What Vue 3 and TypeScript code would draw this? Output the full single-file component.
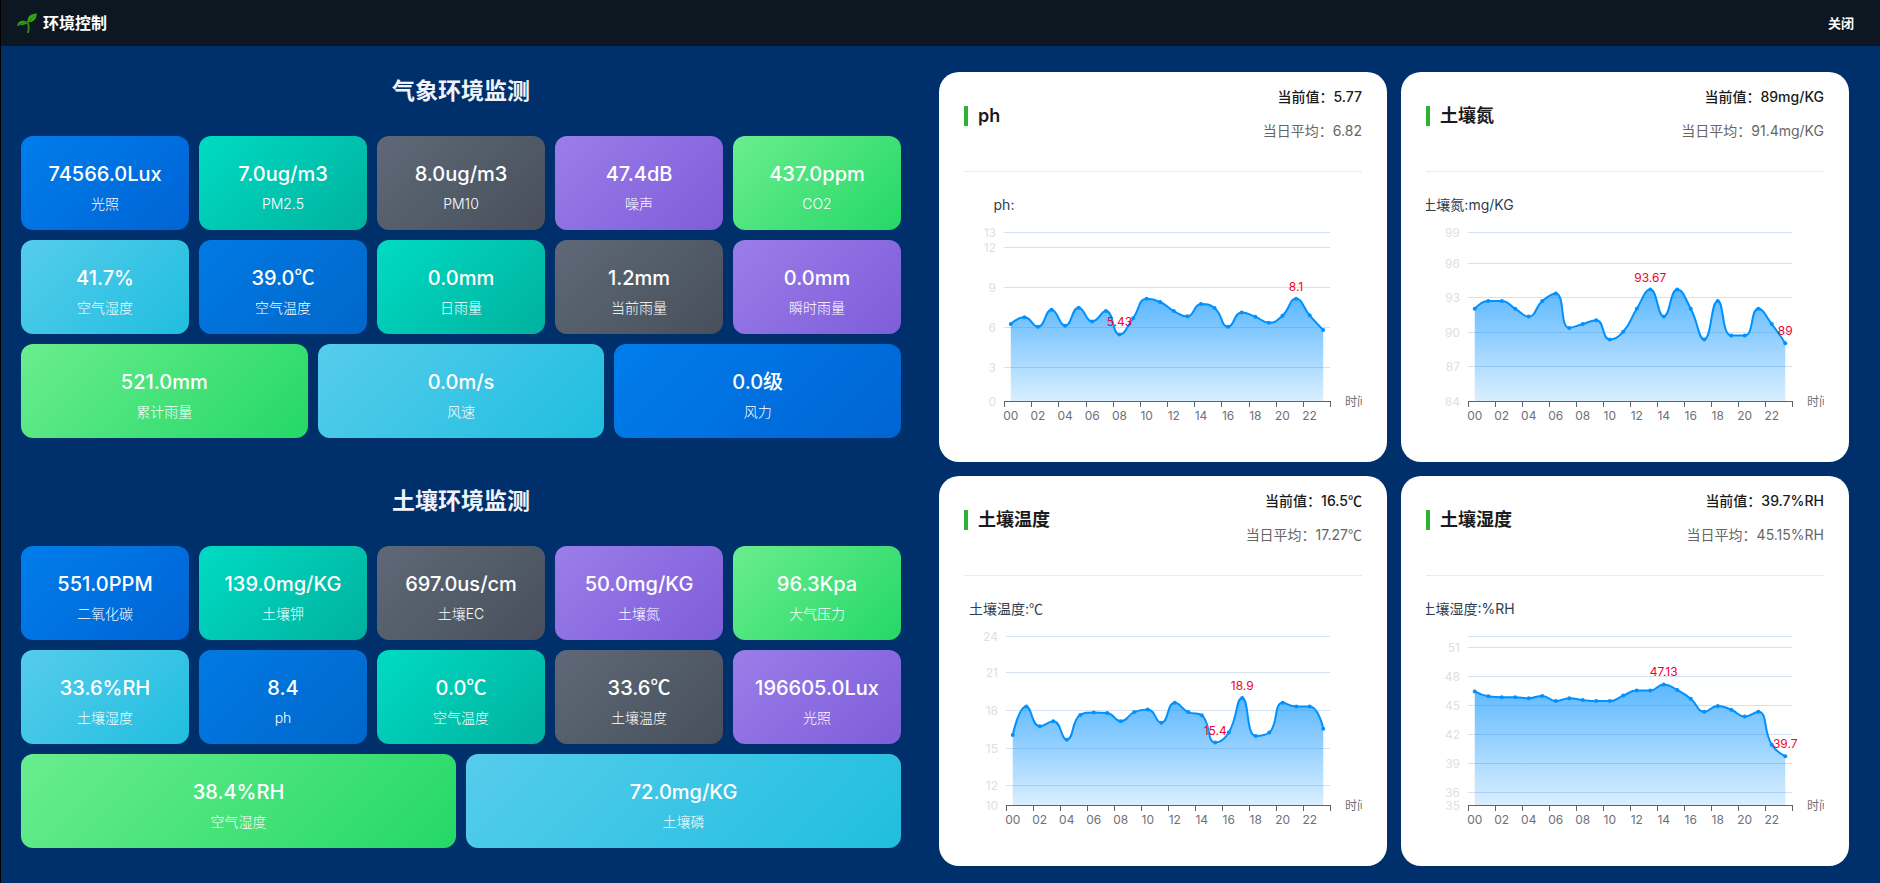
<script setup lang="ts">
import { computed, onBeforeUnmount, onMounted, ref } from 'vue'

interface Tile {
  value: string
  unit: string
  label: string
  tone: string
}

interface Section {
  title: string
  rows: Tile[][]
}

interface ChartCard {
  title: string
  current: string
  average: string
  unit: string
  left: number
  min: number
  max: number
  ticks: { at: number; label: string }[]
  values: number[]
  marks: { index: number; label: string }[]
}

interface Point {
  x: number
  y: number
}

const sections: Section[] = [
  {
    title: '气象环境监测',
    rows: [
      [
        { value: '74566.0', unit: 'Lux', label: '光照', tone: 'blue' },
        { value: '7.0', unit: 'ug/m3', label: 'PM2.5', tone: 'teal' },
        { value: '8.0', unit: 'ug/m3', label: 'PM10', tone: 'slate' },
        { value: '47.4', unit: 'dB', label: '噪声', tone: 'violet' },
        { value: '437.0', unit: 'ppm', label: 'CO2', tone: 'green' },
      ],
      [
        { value: '41.7', unit: '%', label: '空气湿度', tone: 'sky' },
        { value: '39.0', unit: '℃', label: '空气温度', tone: 'navy' },
        { value: '0.0', unit: 'mm', label: '日雨量', tone: 'teal' },
        { value: '1.2', unit: 'mm', label: '当前雨量', tone: 'slate' },
        { value: '0.0', unit: 'mm', label: '瞬时雨量', tone: 'violet' },
      ],
      [
        { value: '521.0', unit: 'mm', label: '累计雨量', tone: 'green' },
        { value: '0.0', unit: 'm/s', label: '风速', tone: 'sky' },
        { value: '0.0', unit: '级', label: '风力', tone: 'blue' },
      ],
    ],
  },
  {
    title: '土壤环境监测',
    rows: [
      [
        { value: '551.0', unit: 'PPM', label: '二氧化碳', tone: 'blue' },
        { value: '139.0', unit: 'mg/KG', label: '土壤钾', tone: 'teal' },
        { value: '697.0', unit: 'us/cm', label: '土壤EC', tone: 'slate' },
        { value: '50.0', unit: 'mg/KG', label: '土壤氮', tone: 'violet' },
        { value: '96.3', unit: 'Kpa', label: '大气压力', tone: 'green' },
      ],
      [
        { value: '33.6', unit: '%RH', label: '土壤湿度', tone: 'sky' },
        { value: '8.4', unit: '', label: 'ph', tone: 'navy' },
        { value: '0.0', unit: '℃', label: '空气温度', tone: 'teal' },
        { value: '33.6', unit: '℃', label: '土壤温度', tone: 'slate' },
        { value: '196605.0', unit: 'Lux', label: '光照', tone: 'violet' },
      ],
      [
        { value: '38.4', unit: '%RH', label: '空气湿度', tone: 'green' },
        { value: '72.0', unit: 'mg/KG', label: '土壤磷', tone: 'sky' },
      ],
    ],
  },
]

const cards: ChartCard[] = [
  {
    title: 'ph',
    current: '5.77',
    average: '6.82',
    unit: '',
    left: 40,
    min: 0.46,
    max: 13.09,
    ticks: [
      { at: 13.09, label: '13' },
      { at: 12, label: '12' },
      { at: 9, label: '9' },
      { at: 6, label: '6' },
      { at: 3, label: '3' },
      { at: 0.46, label: '0' },
    ],
    values: [
      6.21, 6.71, 6.0, 7.28, 6.09, 7.43, 6.41, 7.18, 5.43, 6.64, 8.1, 7.86,
      7.18, 6.79, 7.71, 7.41, 6.0, 7.08, 6.76, 6.31, 6.84, 8.1, 6.86, 5.77,
    ],
    marks: [
      { index: 21, label: '8.1' },
      { index: 8, label: '5.43' },
    ],
  },
  {
    title: '土壤氮',
    current: '89',
    average: '91.4',
    unit: 'mg/KG',
    left: 42,
    min: 83.96,
    max: 98.69,
    ticks: [
      { at: 98.69, label: '99' },
      { at: 96, label: '96' },
      { at: 93, label: '93' },
      { at: 90, label: '90' },
      { at: 87, label: '87' },
      { at: 83.96, label: '84' },
    ],
    values: [
      92, 92.67, 92.67, 92, 91.33, 92.67, 93.33, 90.33, 90.67, 91, 89.33, 90,
      92, 93.67, 91.33, 93.67, 92, 89.33, 92.67, 89.67, 89.67, 92, 90.67, 89,
    ],
    marks: [
      { index: 13, label: '93.67' },
      { index: 23, label: '89' },
    ],
  },
  {
    title: '土壤温度',
    current: '16.5',
    average: '17.27',
    unit: '℃',
    left: 42,
    min: 10.42,
    max: 23.9,
    ticks: [
      { at: 23.9, label: '24' },
      { at: 21, label: '21' },
      { at: 18, label: '18' },
      { at: 15, label: '15' },
      { at: 12, label: '12' },
      { at: 10.42, label: '10' },
    ],
    values: [
      16.0, 18.27, 16.7, 17.1, 15.63, 17.6, 17.8, 17.75, 17.1, 17.83, 18.03, 16.98,
      18.57, 17.83, 17.58, 15.4, 16.2, 18.95, 15.93, 16.2, 18.57, 18.27, 18.27, 16.5,
    ],
    marks: [
      { index: 17, label: '18.9' },
      { index: 15, label: '15.4' },
    ],
  },
  {
    title: '土壤湿度',
    current: '39.7',
    average: '45.15',
    unit: '%RH',
    left: 42,
    min: 34.64,
    max: 52.14,
    ticks: [
      { at: 52.14, label: '' },
      { at: 51, label: '51' },
      { at: 48, label: '48' },
      { at: 45, label: '45' },
      { at: 42, label: '42' },
      { at: 39, label: '39' },
      { at: 36, label: '36' },
      { at: 34.64, label: '35' },
    ],
    values: [
      46.4, 45.9, 45.8, 45.8, 45.7, 45.93, 45.4, 45.7, 45.5, 45.4, 45.4, 45.97,
      46.5, 46.5, 47.13, 46.55, 45.65, 44.3, 44.9, 44.5, 43.8, 44.3, 40.87, 39.7,
    ],
    marks: [
      { index: 14, label: '47.13' },
      { index: 23, label: '39.7' },
    ],
  },
]

const plotTop = 60
const plotBottom = 229
const plotRightInset = 32

const chartWidth = ref(398)
const board = ref<HTMLElement | null>(null)
let observer: ResizeObserver | undefined

onMounted(() => {
  const plot = board.value?.querySelector('.plot')
  if (!plot) return
  observer = new ResizeObserver(([entry]) => {
    chartWidth.value = Math.round(entry.contentRect.width)
  })
  observer.observe(plot)
})

onBeforeUnmount(() => observer?.disconnect())

const clamp = (v: number, a: number, b: number) =>
  Math.max(Math.min(v, Math.max(a, b)), Math.min(a, b))

/** Smooth bezier path whose control points never overshoot the neighbouring samples. */
function smoothPath(points: Point[], smooth = 0.5): string {
  let d = `M${points[0].x.toFixed(2)} ${points[0].y.toFixed(2)}`
  let c0: Point = points[0]
  for (let i = 1; i < points.length; i++) {
    const cur = points[i]
    const prev = points[i - 1]
    const next = points[i + 1]
    let c1: Point = cur
    let out: Point = cur
    if (next) {
      const vx = next.x - prev.x
      const vy = next.y - prev.y
      const lenPrev = Math.hypot(cur.x - prev.x, cur.y - prev.y)
      const lenNext = Math.hypot(next.x - cur.x, next.y - cur.y)
      const ratio = lenNext / (lenNext + lenPrev)
      out = {
        x: clamp(cur.x + vx * smooth * ratio, next.x, cur.x),
        y: clamp(cur.y + vy * smooth * ratio, next.y, cur.y),
      }
      c1 = {
        x: clamp(cur.x - ((out.x - cur.x) * lenPrev) / lenNext, prev.x, cur.x),
        y: clamp(cur.y - ((out.y - cur.y) * lenPrev) / lenNext, prev.y, cur.y),
      }
      out = {
        x: cur.x + ((cur.x - c1.x) * lenNext) / lenPrev,
        y: cur.y + ((cur.y - c1.y) * lenNext) / lenPrev,
      }
    }
    d += ` C${[c0.x, c0.y, c1.x, c1.y, cur.x, cur.y].map((n) => n.toFixed(2)).join(' ')}`
    c0 = out
  }
  return d
}

const charts = computed(() =>
  cards.map((card) => {
    const right = chartWidth.value - plotRightInset
    const step = (right - card.left) / card.values.length
    const toY = (v: number) =>
      plotTop + ((card.max - v) / (card.max - card.min)) * (plotBottom - plotTop)
    const points = card.values.map((v, i) => ({ x: card.left + (i + 0.5) * step, y: toY(v) }))
    const line = smoothPath(points)
    const last = points[points.length - 1]
    return {
      ...card,
      right,
      points,
      line,
      area: `${line} L${last.x.toFixed(2)} ${plotBottom} L${points[0].x.toFixed(2)} ${plotBottom} Z`,
      rows: card.ticks.map((t) => ({ label: t.label, y: Math.round(toY(t.at)) + 0.5 })),
      columns: Array.from({ length: 12 }, (_, i) => ({
        label: String(i * 2).padStart(2, '0'),
        x: points[i * 2].x,
      })),
      axisTicks: Array.from({ length: 13 }, (_, i) => Math.round(card.left + i * 2 * step) + 0.5),
      peaks: card.marks.map((m) => ({ label: m.label, ...points[m.index] })),
    }
  }),
)
</script>

<template>
  <div class="window">
    <header class="bar">
      <div class="brand">
        <svg class="sprout" viewBox="0 0 20 20" aria-hidden="true">
          <path
            d="M10.6 9.6 Q12.6 13.6 11 19.2"
            fill="none"
            stroke="#2c8a17"
            stroke-width="2"
            stroke-linecap="round"
          />
          <path d="M10.4 9.6 C10.2 3.6 13.8 0.8 19.8 0.6 C19.6 6 16.6 9.8 10.4 9.6 Z" fill="#37a616" />
          <path d="M0.2 13.2 C0.6 8 5.6 6 11 9.2 C8.6 12.8 4.4 10.8 0.2 13.2 Z" fill="#37a616" />
          <path d="M10.8 9.4 L17.4 2.8 M1.6 11.8 Q6 9 10.4 9.4" fill="none" stroke="#1f7a10" />
        </svg>
        <h1 class="name">环境控制</h1>
      </div>
      <button type="button" class="close">关闭</button>
    </header>

    <main class="content">
      <div class="monitors">
        <section v-for="section in sections" :key="section.title" class="monitor">
          <h2 class="heading">{{ section.title }}</h2>
          <div class="rows">
            <div v-for="(row, r) in section.rows" :key="r" class="row">
              <div v-for="tile in row" :key="tile.label" class="tile" :class="tile.tone">
                <span class="value">{{ tile.value }}<span :class="{ degree: tile.unit === '℃' }">{{ tile.unit }}</span></span>
                <span class="label">{{ tile.label }}</span>
              </div>
            </div>
          </div>
        </section>
      </div>

      <div ref="board" class="board">
        <article v-for="(chart, n) in charts" :key="chart.title" class="card">
          <header class="card-head">
            <h3 class="card-title">{{ chart.title }}</h3>
            <div class="stats">
              <p class="now">
                当前值：{{ chart.current }}<span :class="{ degree: chart.unit === '℃' }">{{ chart.unit }}</span>
              </p>
              <p class="avg">
                当日平均：{{ chart.average }}<span :class="{ degree: chart.unit === '℃' }">{{ chart.unit }}</span>
              </p>
            </div>
          </header>
          <svg class="plot" role="img" :aria-label="chart.title">
            <defs>
              <linearGradient :id="`fill-${n}`" x1="0" y1="0" x2="0" y2="1">
                <stop offset="0" stop-color="#0090ff" stop-opacity="0.64" />
                <stop offset="1" stop-color="#0090ff" stop-opacity="0.15" />
              </linearGradient>
            </defs>
            <text class="axis-name" :x="chart.left" y="38">{{ chart.title }}:<tspan :class="{ degree: chart.unit === '℃' }">{{ chart.unit }}</tspan></text>
            <g v-for="row in chart.rows" :key="row.y">
              <line class="grid" :x1="chart.left" :x2="chart.right" :y1="row.y" :y2="row.y" />
              <text class="y-label" :x="chart.left - 8" :y="row.y + 4">{{ row.label }}</text>
            </g>
            <path :d="chart.area" :fill="`url(#fill-${n})`" />
            <path
              class="axis"
              :d="`M${chart.left} 229.5 H${chart.right + 1}` + chart.axisTicks.map((x) => ` M${x} 229 v6`).join('')"
            />
            <text v-for="col in chart.columns" :key="col.label" class="x-label" :x="col.x" y="248">
              {{ col.label }}
            </text>
            <text class="x-name" :x="chart.right + 15" y="234">时间</text>
            <path class="series" :d="chart.line" />
            <circle v-for="(p, i) in chart.points" :key="i" class="dot" :cx="p.x" :cy="p.y" r="2" />
            <text v-for="peak in chart.peaks" :key="peak.label" class="peak" :x="peak.x" :y="peak.y - 8">
              {{ peak.label }}
            </text>
          </svg>
        </article>
      </div>
    </main>
  </div>
</template>

<style>
body {
  margin: 0;
  background: #00306b;
}
</style>

<style scoped>
.window {
  box-sizing: border-box;
  min-height: 100vh;
  border-left: 1px solid #000;
  background: #00306b;
  font-family: Inter, 'Noto Sans CJK SC', sans-serif;
  color: #fff;
}

h1,
h2,
h3,
p {
  margin: 0;
}

.degree {
  font-family: 'Noto Sans CJK SC', sans-serif;
  line-height: 1;
}

.bar {
  display: flex;
  align-items: center;
  justify-content: space-between;
  height: 46px;
  padding: 0 26px 0 16px;
  background: #0d1721;
}

.brand {
  display: flex;
  align-items: center;
  gap: 6px;
}

.sprout {
  width: 20px;
  height: 20px;
}

.name {
  font-size: 16px;
  line-height: 24px;
  font-weight: 600;
}

.close {
  padding: 0;
  border: 0;
  background: none;
  color: #fff;
  font: inherit;
  font-size: 13px;
  line-height: 20px;
  font-weight: 600;
  cursor: pointer;
}

.content {
  display: grid;
  grid-template-columns: 880fr 910fr;
  gap: 38px;
  padding: 26px 31px 16px 20px;
}

.monitors {
  display: flex;
  flex-direction: column;
  gap: 44px;
}

.heading {
  margin-bottom: 26px;
  font-size: 23px;
  line-height: 38px;
  font-weight: 600;
  text-align: center;
  color: #f0f4fa;
}

.rows {
  display: flex;
  flex-direction: column;
  gap: 10px;
}

.row {
  display: flex;
  gap: 10px;
}

.tile {
  box-sizing: border-box;
  flex: 1 1 0;
  display: flex;
  flex-direction: column;
  align-items: center;
  gap: 6px;
  padding: 24px 8px 16px;
  border-radius: 12px;
}

.value {
  font-size: 20px;
  line-height: 28px;
  font-weight: 500;
}

.label {
  font-size: 14px;
  line-height: 20px;
  font-weight: 300;
}

.blue {
  background: linear-gradient(135deg, #007deb, #0064d4);
}

.navy {
  background: linear-gradient(135deg, #007ae4, #0067cb);
}

.teal {
  background: linear-gradient(135deg, #00dbc3, #00b19e);
}

.slate {
  background: linear-gradient(135deg, #606877, #525d69 50%, #494e5b);
}

.violet {
  background: linear-gradient(135deg, #9b7de9, #7e5dd9);
}

.green {
  background: linear-gradient(135deg, #6aed8e, #24d866);
}

.sky {
  background: linear-gradient(135deg, #56ccec, #20bedf);
}

.board {
  display: grid;
  grid-template-columns: 1fr 1fr;
  align-content: start;
  gap: 14px;
}

.card {
  padding: 0 25px 30px;
  border-radius: 20px;
  background: #fff;
  color: #1a1a1a;
}

.card-head {
  display: flex;
  justify-content: space-between;
  padding: 8px 0 23px;
  border-bottom: 1px solid #ebebeb;
}

.card-title {
  align-self: center;
  margin-top: 4px;
  padding-left: 10px;
  border-left: 4px solid #2bb232;
  font-size: 18px;
  line-height: 20px;
  font-weight: 600;
}

.stats {
  font-size: 14px;
  line-height: 34px;
  text-align: right;
}

.now {
  font-weight: 500;
}

.avg {
  color: #666;
}

.plot {
  display: block;
  width: 100%;
  height: 260px;
  overflow: hidden;
}

.plot text {
  font-size: 12px;
}

.plot .axis-name {
  font-size: 14px;
  fill: #2c3e50;
  text-anchor: middle;
}

.grid {
  stroke: #d5e1ee;
}

.y-label {
  fill: #e0e0e0;
  text-anchor: end;
}

.axis {
  fill: none;
  stroke: #5c6270;
}

.x-label {
  fill: #6e7079;
  text-anchor: middle;
}

.x-name {
  fill: #6e7079;
}

.series {
  fill: none;
  stroke: #0091ff;
  stroke-width: 2;
  stroke-linejoin: bevel;
}

.dot {
  fill: #0091ff;
}

.peak {
  fill: #f5002d;
  text-anchor: middle;
}
</style>
